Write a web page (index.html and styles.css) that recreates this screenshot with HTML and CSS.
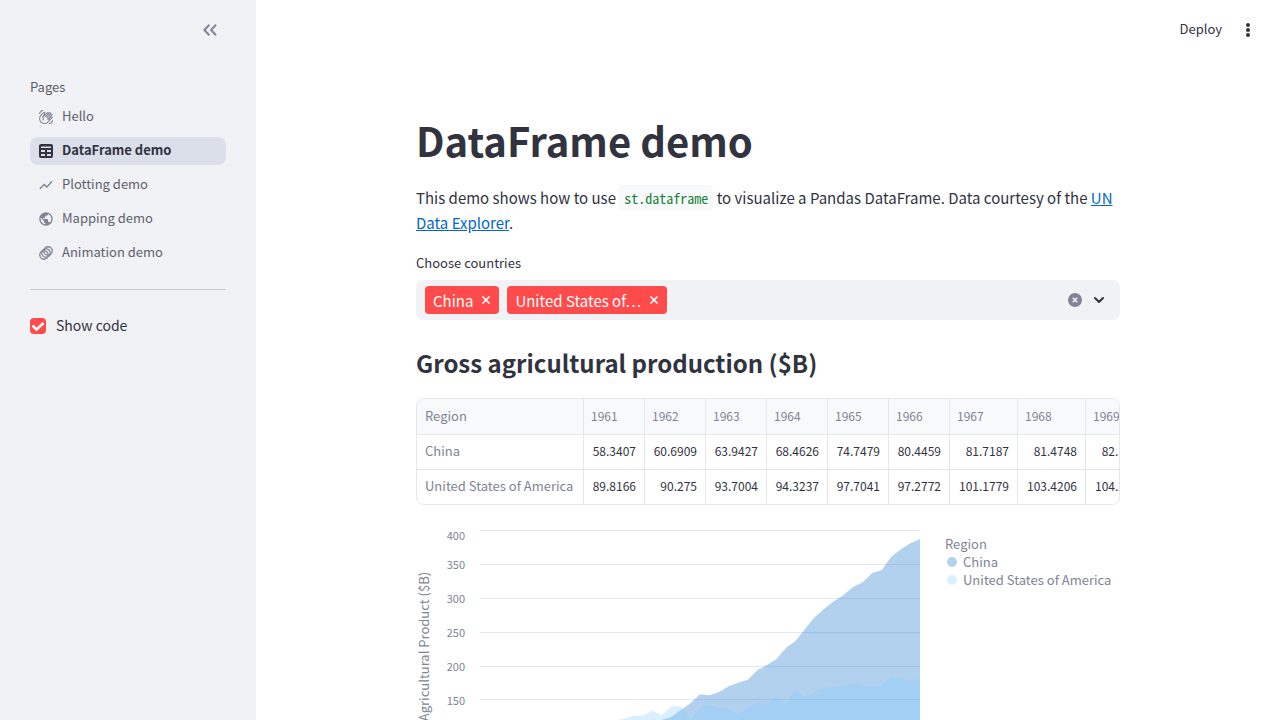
FILE: index.html
```html
<!DOCTYPE html>
<html lang="en">
<head>
<meta charset="utf-8">
<meta name="viewport" content="width=device-width, initial-scale=1">
<title>DataFrame demo</title>
<link rel="stylesheet" href="styles.css">
</head>
<body>
<div class="app">
  <aside class="sidebar">
    <div class="sidebar-head">
      <button class="icon-button collapse" aria-label="Collapse sidebar">
        <svg width="20" height="20" viewBox="0 0 20 20" fill="none" stroke="currentColor" stroke-width="2"><path d="M9.300 4.800 4.400 10l4.900 5.200M16 4.800 11.100 10l4.900 5.200"/></svg>
      </button>
    </div>
    <nav class="nav" aria-label="Pages">
      <h2 class="nav-title">Pages</h2>
      <a class="nav-link" href="#hello">
        <svg class="nav-icon" viewBox="0 0 24 24" fill="none" stroke="currentColor" stroke-width="1.800"><path d="M23 17c0 3.300-2.700 6-6 6M1 7c0-3.300 2.700-6 6-6M8 4.300l-4.600 4.600c-3.200 3.200-3.200 8.500 0 11.700s8.500 3.200 11.700 0l7-7c.5-.5.5-1.300 0-1.800s-1.300-.5-1.800 0l-4.400 4.400M20.300 16.200 15.200 15.500l6.500-6.500c.5-.5.5-1.300 0-1.800s-1.300-.5-1.800 0l-6.500 6.500M13.400 12.900l6.200-6.200c.5-.5.5-1.300 0-1.800s-1.300-.5-1.800 0l-6.900 6.900M10.900 11.800l5-5c.5-.5.5-1.300 0-1.800s-1.300-.5-1.800 0l-7.600 7.600c1.200 1.600 1.100 3.800-.3 5.300M6.500 12.600 9.800 6.100c.5-.5.5-1.300 0-1.800s-1.300-.5-1.800 0"/></svg>
        <span class="nav-text">Hello</span>
      </a>
      <a class="nav-link current" href="#dataframe" aria-current="page">
        <svg class="nav-icon" viewBox="0 0 16 16" fill="currentColor" fill-rule="evenodd"><path d="M3 1h10a2 2 0 0 1 2 2v10a2 2 0 0 1-2 2H3a2 2 0 0 1-2-2V3a2 2 0 0 1 2-2zM3 3.500v1.500h10v-1.500zM3 7v2h4v-2zM9 7v2h4v-2zM3 11v2h4v-2zM9 11v2h4v-2z"/></svg>
        <span class="nav-text">DataFrame demo</span>
      </a>
      <a class="nav-link" href="#plotting">
        <svg class="nav-icon" viewBox="0 0 24 24" fill="none" stroke="currentColor" stroke-width="2.500"><path d="M1.500 18.500 9 11l4.500 4.500L22.500 5.500"/></svg>
        <span class="nav-text">Plotting demo</span>
      </a>
      <a class="nav-link" href="#mapping">
        <svg class="nav-icon" viewBox="0 0 24 24" fill="currentColor"><path d="M12 .5C5.650.5.500 5.650.500 12S5.650 23.500 12 23.500 23.500 18.350 23.500 12 18.350.5 12 .5zm-1.150 20.620C6.310 20.560 2.800 16.690 2.800 12c0-.71.09-1.390.24-2.060L8.550 15.450v1.150c0 1.260 1.030 2.300 2.300 2.300zm7.930-2.920c-.3-.93-1.150-1.600-2.180-1.600h-1.150v-3.450c0-.63-.52-1.150-1.150-1.150H7.400V9.700h2.300c.63 0 1.150-.52 1.150-1.150v-2.300h2.300c1.260 0 2.300-1.030 2.300-2.300v-.47c3.370 1.370 5.750 4.670 5.750 8.520 0 2.390-.92 4.570-2.420 6.200z"/></svg>
        <span class="nav-text">Mapping demo</span>
      </a>
      <a class="nav-link" href="#animation">
        <svg class="nav-icon" viewBox="0 0 24 24" fill="none" stroke="currentColor" stroke-width="2.200"><circle cx="8.500" cy="15.500" r="7.200"/><circle cx="12" cy="12" r="7.200"/><circle cx="15.500" cy="8.500" r="7.200"/></svg>
        <span class="nav-text">Animation demo</span>
      </a>
    </nav>
    <hr class="rule">
    <label class="check"><input type="checkbox" checked>Show code</label>
  </aside>

  <main class="main">
    <header class="toolbar">
      <button class="deploy">Deploy</button>
      <button class="icon-button" aria-label="Main menu">
        <svg width="20" height="20" viewBox="0 0 20 20" fill="currentColor"><circle cx="10" cy="5" r="2"/><circle cx="10" cy="10" r="2"/><circle cx="10" cy="15" r="2"/></svg>
      </button>
    </header>

    <div class="content">
      <h1 class="title">DataFrame demo</h1>
      <p class="intro">This demo shows how to use <code>st.dataframe</code> to visualize a Pandas DataFrame. Data courtesy of the <a href="#data">UN Data Explorer</a>.</p>

      <label class="field-label" for="countries">Choose countries</label>
      <div class="multiselect">
        <span class="tag">China
          <button class="tag-remove" aria-label="Remove China"><svg width="10" height="10" viewBox="0 0 10 10" stroke="currentColor" stroke-width="1.700"><path d="M1.500 1.500l7 7M8.500 1.500 1.500 8.500"/></svg></button>
        </span>
        <span class="tag">United States of…
          <button class="tag-remove" aria-label="Remove United States of America"><svg width="10" height="10" viewBox="0 0 10 10" stroke="currentColor" stroke-width="1.700"><path d="M1.500 1.500l7 7M8.500 1.500 1.500 8.500"/></svg></button>
        </span>
        <input class="search" id="countries" type="text">
        <button class="select-button clear" aria-label="Clear all"><svg width="14" height="14" viewBox="0 0 14 14"><circle cx="7" cy="7" r="7" fill="currentColor"/><path d="M4.700 4.700l4.600 4.600M9.300 4.700 4.700 9.300" stroke="#f0f2f6" stroke-width="1.500"/></svg></button>
        <button class="select-button" aria-label="Open"><svg width="12" height="12" viewBox="0 0 12 12" fill="none" stroke="currentColor" stroke-width="2" stroke-linecap="round" stroke-linejoin="round"><path d="M2 4l4 4 4-4"/></svg></button>
      </div>

      <h2 class="subtitle">Gross agricultural production ($B)</h2>

      <div class="frame">
        <table class="data">
          <colgroup><col class="col-region"><col span="6" class="col-narrow"><col span="3" class="col-wide"></colgroup>
          <thead><tr><th>Region</th><th>1961</th><th>1962</th><th>1963</th><th>1964</th><th>1965</th><th>1966</th><th>1967</th><th>1968</th><th>1969</th></tr></thead>
          <tbody>
            <tr><th>China</th><td>58.3407</td><td>60.6909</td><td>63.9427</td><td>68.4626</td><td>74.7479</td><td>80.4459</td><td>81.7187</td><td>81.4748</td><td>82.1273</td></tr>
            <tr><th>United States of America</th><td>89.8166</td><td>90.275</td><td>93.7004</td><td>94.3237</td><td>97.7041</td><td>97.2772</td><td>101.1779</td><td>103.4206</td><td>104.2119</td></tr>
          </tbody>
        </table>
      </div>

      <div class="chart">
        <div class="axis-title">Gross Agricultural Product ($B)</div>
        <div class="ticks"><span class="first">400</span><span>350</span><span>300</span><span>250</span><span>200</span><span>150</span><span>100</span><span>50</span></div>
        <svg class="plot" viewBox="0 0 440 272" preserveAspectRatio="none" role="img" aria-label="Gross agricultural product by year">
          <path class="grid-lines" d="M0 .5h440M0 34.500h440M0 68.500h440M0 102.500h440M0 136.500h440M0 169.500h440M0 204.500h440M0 238.500h440"/>
          <polygon class="area-china" points="0,232 38.300,225 76.500,217 114.800,208 143.500,202 162.600,196 172.200,193 181.700,190 191.300,187 200.900,180 210.400,173.300 220,164.300 229.600,165.300 239.100,162 248.700,156.300 258.300,152.700 267.800,149.700 277.400,140.300 287,135 296.500,129 306.100,117.700 315.700,110.700 325.200,98.700 334.800,87 344.300,78.700 353.900,71.300 363.500,65 373,57 382.600,52.300 392.200,43 401.700,40 411.300,26.700 420.900,19.300 430.400,13.300 440,9 440,272 0,272"/>
          <polygon class="area-usa" points="0,211 38.300,206 76.500,202 114.800,198 133.900,191 143.500,188.700 153,185.700 162.600,185.700 172.200,180.700 181.700,185 191.300,176.300 200.900,176.300 210.400,190 220,178.300 229.600,174.300 239.100,178.700 248.700,178.700 258.300,185 267.800,177.300 277.400,173 287,174.300 296.500,166.300 306.100,174 315.700,159.700 325.200,167.700 334.800,162 344.300,157.700 353.900,157.700 363.500,156 373,153.300 382.600,155.300 392.200,157.300 401.700,154.700 411.300,147 420.900,148 430.400,151 440,146.300 440,272 0,272"/>
        </svg>
        <ul class="legend">
          <li class="legend-title">Region</li>
          <li><span class="dot china"></span>China</li>
          <li><span class="dot usa"></span>United States of America</li>
        </ul>
      </div>
    </div>
  </main>
</div>
</body>
</html>
```
FILE: styles.css
```css
* { box-sizing: border-box; }
body {
  margin: 0;
  background: #fff;
  color: #31333f;
  font-family: "Noto Sans CJK SC", "Noto Sans", sans-serif;
  font-size: 15px;
  line-height: 25px;
}
button { border: 0; padding: 0; background: none; color: inherit; font: inherit; cursor: pointer; }
svg { display: block; flex: none; }
h1, h2, p, ul { margin: 0; }

.app { display: flex; height: 100vh; }

.sidebar { flex: none; width: 256px; padding: 0 30px; background: #f0f2f6; }
.sidebar-head { display: flex; justify-content: flex-end; align-items: center; height: 60px; padding-right: 6px; }
.icon-button { display: flex; color: #31333f; }
.collapse { color: #808495; }

.nav { display: flex; flex-direction: column; gap: 6px; padding-top: 16px; font-size: 13px; }
.nav-title { font-size: 13px; font-weight: 400; line-height: 21px; color: #5c5e69; }
.nav-link {
  display: flex; align-items: center; gap: 8px;
  height: 28px; padding: 0 8px;
  border-radius: 8px;
  color: #5f616d; text-decoration: none;
}
.nav-text { padding-bottom: 3px; }
.nav-icon { width: 16px; height: 16px; color: #808495; padding: 1px; }
.current { background: #dadfe9; color: #31333f; font-weight: 700; }
.current .nav-icon { color: #31333f; padding: 0; }
.rule { margin: 22px 0 23px; border: 0; border-top: 1px solid #c8cad0; }
.check { display: flex; align-items: center; gap: 10px; font-size: 14px; }
.check input {
  appearance: none;
  width: 16px; height: 16px; margin: 0;
  border-radius: 4px;
  background: #ff4b4b url("data:image/svg+xml,%3Csvg xmlns='http://www.w3.org/2000/svg' viewBox='0 0 16 16'%3E%3Cpath d='M2.500 7.500l4 4L13.500 5' fill='none' stroke='white' stroke-width='2.500'/%3E%3C/svg%3E") center / 16px 16px;
}

.main { flex: 1; min-width: 0; overflow-y: auto; scrollbar-width: none; }
.toolbar { display: flex; justify-content: flex-end; align-items: center; gap: 16px; height: 60px; padding-right: 22px; }
.deploy { padding-bottom: 3px; font-size: 13px; }

.content { max-width: 736px; margin: 0 auto; padding: 54px 16px 80px; }
.title { font-size: 40px; font-weight: 700; line-height: 53px; }
.intro { margin-top: 18px; }
.intro a { color: #0068c9; }
code { padding: 3px 5px; border-radius: 4px; background: #f8f9fb; color: #158237; font: 14px/16px "Noto Sans Mono CJK SC", "Liberation Mono", monospace; }

.field-label { display: block; margin-top: 16px; font-size: 13px; line-height: 24px; }
.multiselect {
  display: flex; align-items: center; gap: 8px;
  min-height: 40px; margin-top: 5px; padding: 6px 13px 6px 9px;
  border-radius: 8px; background: #f0f2f6;
}
.tag { display: flex; align-items: center; gap: 8px; height: 28px; padding: 0 8px; border-radius: 4px; background: #ff4b4b; color: #fff; white-space: nowrap; }
.search { flex: 1; min-width: 0; border: 0; outline: 0; background: none; font: inherit; }
.select-button { display: flex; justify-content: center; width: 16px; }
.clear { color: #808495; }

.subtitle { margin-top: 26px; font-size: 24px; font-weight: 700; line-height: 34px; }

.frame { margin-top: 18px; border: 1px solid #e6e7eb; border-radius: 8px; overflow: hidden; }
.data { width: 737px; table-layout: fixed; border-collapse: separate; border-spacing: 0; font-size: 13px; line-height: 20px; }
.col-region { width: 167px; }
.col-narrow { width: 61px; }
.col-wide { width: 68px; }
.data th, .data td { height: 35px; padding: 0 8px 2px; border-right: 1px solid #e6e7eb; border-bottom: 1px solid #e6e7eb; white-space: nowrap; }
.data th { color: #808495; font-weight: 400; text-align: left; }
.data td { padding: 0 8px 2px 7px; text-align: right; font-size: 12px; }
.data thead th { height: 36px; background: #f8f9fb; }
.data thead th + th { padding: 0 7px 2px; font-size: 12px; }
.data tbody tr:last-child > * { height: 34px; border-bottom: 0; }

.chart { display: flex; align-items: flex-start; margin-top: 25px; color: #808495; font-size: 13px; }
.axis-title { width: 16px; height: 270px; writing-mode: vertical-rl; transform: rotate(180deg); line-height: 16px; text-align: center; white-space: nowrap; }
.ticks { display: flex; flex-direction: column; width: 33px; text-align: right; font-size: 11px; line-height: 34px; }
.ticks .first { height: 17px; line-height: 10px; }
.plot { flex: 1; min-width: 0; height: 272px; margin-left: 15px; }
.grid-lines { stroke: #e6e8ef; fill: none; }
.area-china { fill: #0068c9; fill-opacity: .3; }
.area-usa { fill: #83c9ff; fill-opacity: .3; }
.legend { width: 175px; margin-left: 25px; padding: 5px 0 0; list-style: none; line-height: 18px; white-space: nowrap; }
.legend li { display: flex; align-items: center; gap: 6px; }
.dot { width: 10px; height: 10px; margin-left: 2px; border-radius: 50%; }
.china { background: #b2d2ef; }
.usa { background: #daefff; }
```
